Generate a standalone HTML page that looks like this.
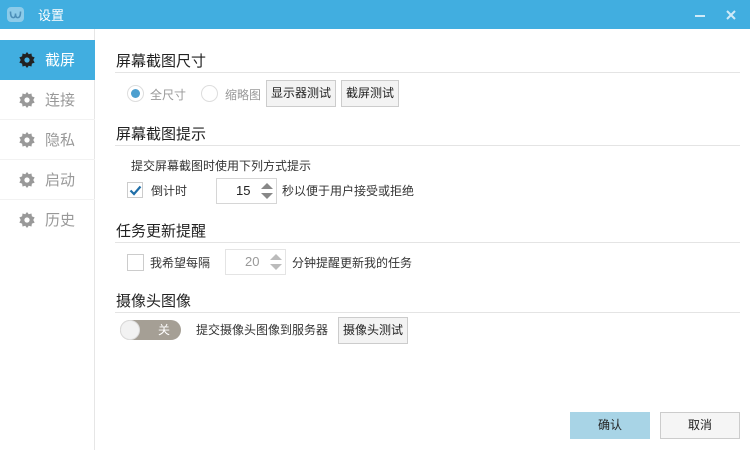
<!DOCTYPE html>
<html><head><meta charset="utf-8"><style>
*{margin:0;padding:0;box-sizing:border-box}
body{width:750px;height:450px;overflow:hidden;background:#fff;font-family:"Liberation Sans","Noto Sans CJK SC",sans-serif;position:relative;color:#222}
.a{position:absolute;white-space:nowrap}
.title{left:0;top:0;width:750px;height:29px;background:#41aee0}
.side{left:0;top:29px;width:95px;height:421px;border-right:1px solid #e6e6e6}
.item{left:0;width:95px;height:40px;font-size:15px;color:#999;border-bottom:1px solid #f2f2f2}
.item span{position:absolute;left:45px;top:9px}
.item svg{position:absolute;left:19px;top:12px}
.h{font-size:15px;color:#222;left:116px}
.ln{left:115px;width:625px;height:1px;background:#e4e4e4}
.t{font-size:12px;color:#333}
.btn{border:1px solid #ccc;background:#f3f3f3;font-size:12px;color:#222;text-align:center;line-height:25px;height:27px}
.spin{border:1px solid #d6d6d6;height:26px;width:61px;font-size:13px}
</style></head><body>
<div class="a title"></div>
<svg class="a" style="left:7px;top:7px" width="17" height="15" viewBox="0 0 17 15"><rect x="0" y="0" width="17" height="15" rx="4" fill="#8ccbe9"/><path d="M3.5 4.5 Q3.5 11.5 7 10.5 Q8.5 10 8.5 6.5 Q8.5 10 10 10.5 Q13.5 11.5 13.5 4.5" stroke="#4d8fb8" stroke-width="1.6" fill="none"/></svg>
<div class="a" style="left:38px;top:5px;font-size:13px;color:#fff">设置</div>
<div class="a" style="left:695px;top:15px;width:10px;height:2px;background:#cfeaf8"></div>
<svg class="a" style="left:726px;top:10px" width="10" height="10"><path d="M1 1L9 9M9 1L1 9" stroke="#cfeaf8" stroke-width="2"/></svg>

<div class="a side"></div>
<div class="a item" style="top:40px;background:#41aee0;color:#fff;border-bottom:none"><svg width="16" height="16" viewBox="0 0 14 14"><path d="M7 0l1.5 2 2.4-.7.4 2.5 2.4.9-1.2 2.3 1.2 2.3-2.4.9-.4 2.5-2.4-.7L7 14l-1.5-2-2.4.7-.4-2.5-2.4-.9L1.5 7 .3 4.7l2.4-.9.4-2.5 2.4.7z" fill="#222"/><circle cx="7" cy="7" r="2.3" fill="#41aee0"/></svg><span>截屏</span></div>
<div class="a item" style="top:80px"><svg width="16" height="16" viewBox="0 0 14 14"><path d="M7 0l1.5 2 2.4-.7.4 2.5 2.4.9-1.2 2.3 1.2 2.3-2.4.9-.4 2.5-2.4-.7L7 14l-1.5-2-2.4.7-.4-2.5-2.4-.9L1.5 7 .3 4.7l2.4-.9.4-2.5 2.4.7z" fill="#999"/><circle cx="7" cy="7" r="2.3" fill="#fff"/></svg><span>连接</span></div>
<div class="a item" style="top:120px"><svg width="16" height="16" viewBox="0 0 14 14"><path d="M7 0l1.5 2 2.4-.7.4 2.5 2.4.9-1.2 2.3 1.2 2.3-2.4.9-.4 2.5-2.4-.7L7 14l-1.5-2-2.4.7-.4-2.5-2.4-.9L1.5 7 .3 4.7l2.4-.9.4-2.5 2.4.7z" fill="#999"/><circle cx="7" cy="7" r="2.3" fill="#fff"/></svg><span>隐私</span></div>
<div class="a item" style="top:160px"><svg width="16" height="16" viewBox="0 0 14 14"><path d="M7 0l1.5 2 2.4-.7.4 2.5 2.4.9-1.2 2.3 1.2 2.3-2.4.9-.4 2.5-2.4-.7L7 14l-1.5-2-2.4.7-.4-2.5-2.4-.9L1.5 7 .3 4.7l2.4-.9.4-2.5 2.4.7z" fill="#999"/><circle cx="7" cy="7" r="2.3" fill="#fff"/></svg><span>启动</span></div>
<div class="a item" style="top:200px;border-bottom:none"><svg width="16" height="16" viewBox="0 0 14 14"><path d="M7 0l1.5 2 2.4-.7.4 2.5 2.4.9-1.2 2.3 1.2 2.3-2.4.9-.4 2.5-2.4-.7L7 14l-1.5-2-2.4.7-.4-2.5-2.4-.9L1.5 7 .3 4.7l2.4-.9.4-2.5 2.4.7z" fill="#999"/><circle cx="7" cy="7" r="2.3" fill="#fff"/></svg><span>历史</span></div>

<div class="a h" style="top:50px">屏幕截图尺寸</div>
<div class="a ln" style="top:72px"></div>
<div class="a" style="left:127px;top:85px;width:17px;height:17px;border-radius:50%;border:1px solid #ddd;background:#fff"><div style="position:absolute;left:3px;top:3px;width:9px;height:9px;border-radius:50%;background:#4d9fcf"></div></div>
<div class="a t" style="left:150px;top:86px;color:#999">全尺寸</div>
<div class="a" style="left:201px;top:85px;width:17px;height:17px;border-radius:50%;border:1px solid #ddd"></div>
<div class="a t" style="left:225px;top:86px;color:#999">缩略图</div>
<div class="a btn" style="left:266px;top:80px;width:70px">显示器测试</div>
<div class="a btn" style="left:341px;top:80px;width:58px">截屏测试</div>

<div class="a h" style="top:123px">屏幕截图提示</div>
<div class="a ln" style="top:145px"></div>
<div class="a t" style="left:131px;top:157px">提交屏幕截图时使用下列方式提示</div>
<div class="a" style="left:127px;top:182px;width:16px;height:16px;border:1px solid #ccc"></div>
<svg class="a" style="left:129px;top:185px" width="13" height="11"><path d="M1.5 5.5L5 9L11.5 1.5" stroke="#1f6ea8" stroke-width="2.2" fill="none"/></svg>
<div class="a t" style="left:151px;top:182px">倒计时</div>
<div class="a spin" style="left:216px;top:178px"><span style="position:absolute;left:19px;top:4px">15</span></div>
<svg class="a" style="left:259px;top:180px" width="16" height="22"><path d="M2 9L8 3L14 9Z" fill="#888"/><path d="M2 13L8 19L14 13Z" fill="#888"/></svg>
<div class="a t" style="left:282px;top:182px">秒以便于用户接受或拒绝</div>

<div class="a h" style="top:220px">任务更新提醒</div>
<div class="a ln" style="top:242px"></div>
<div class="a" style="left:127px;top:254px;width:17px;height:17px;border:1px solid #ccc"></div>
<div class="a t" style="left:150px;top:254px">我希望每隔</div>
<div class="a spin" style="left:225px;top:249px;border-color:#e4e4e4;color:#999"><span style="position:absolute;left:19px;top:4px">20</span></div>
<svg class="a" style="left:268px;top:251px" width="16" height="22"><path d="M2 9L8 3L14 9Z" fill="#bbb"/><path d="M2 13L8 19L14 13Z" fill="#bbb"/></svg>
<div class="a t" style="left:292px;top:254px">分钟提醒更新我的任务</div>

<div class="a h" style="top:290px">摄像头图像</div>
<div class="a ln" style="top:312px"></div>
<div class="a" style="left:120px;top:320px;width:61px;height:20px;border-radius:10px;background:#a59f95"></div>
<div class="a" style="left:120px;top:320px;width:20px;height:20px;border-radius:50%;background:#f2f2f2;border:1px solid #ddd"></div>
<div class="a" style="left:158px;top:321px;font-size:12px;color:#fff">关</div>
<div class="a t" style="left:196px;top:321px">提交摄像头图像到服务器</div>
<div class="a btn" style="left:338px;top:317px;width:70px">摄像头测试</div>

<div class="a" style="left:570px;top:412px;width:80px;height:27px;background:#a8d4e6;font-size:12px;text-align:center;line-height:27px">确认</div>
<div class="a" style="left:660px;top:412px;width:80px;height:27px;background:#f5f5f5;border:1px solid #ccc;font-size:12px;text-align:center;line-height:25px">取消</div>
</body></html>
